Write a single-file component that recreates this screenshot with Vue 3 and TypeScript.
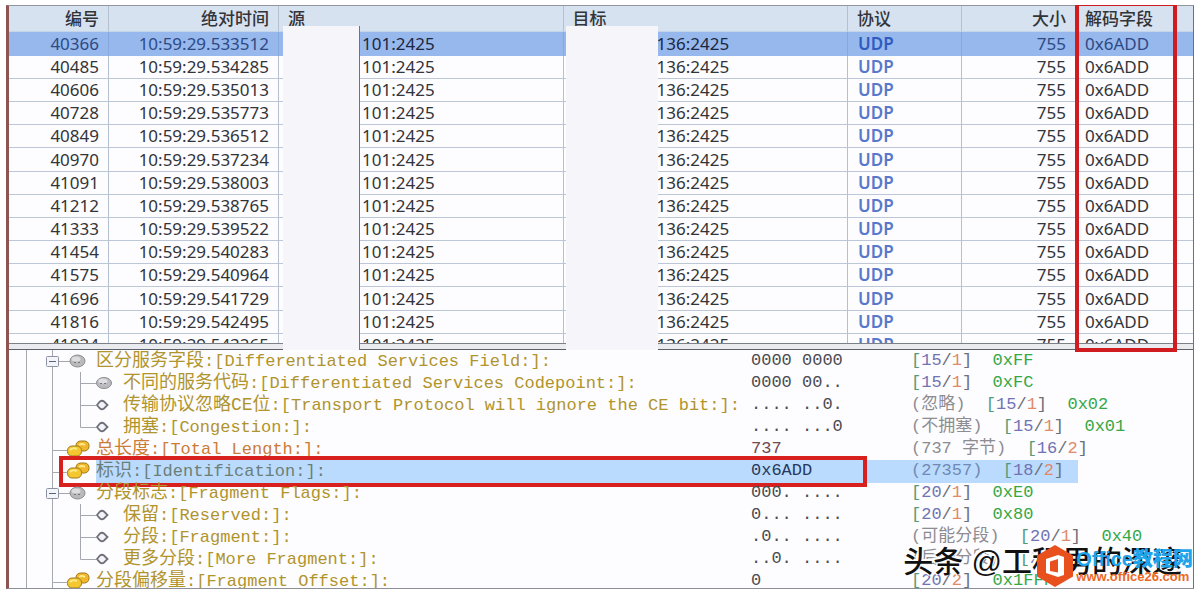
<script setup lang="ts">
interface Piece { t: string; c: string }
interface Field {
  kind: 'group' | 'gold' | 'oval' | 'ring'
  last?: boolean
  tone?: string
  selected?: boolean
  cn: string
  en: string
  value: string
  note?: string
  pos: [string, string]
  hex?: string
}

const packets: [string, string][] = [
  ['40366', '10:59:29.533512'],
  ['40485', '10:59:29.534285'],
  ['40606', '10:59:29.535013'],
  ['40728', '10:59:29.535773'],
  ['40849', '10:59:29.536512'],
  ['40970', '10:59:29.537234'],
  ['41091', '10:59:29.538003'],
  ['41212', '10:59:29.538765'],
  ['41333', '10:59:29.539522'],
  ['41454', '10:59:29.540283'],
  ['41575', '10:59:29.540964'],
  ['41696', '10:59:29.541729'],
  ['41816', '10:59:29.542495'],
  ['41934', '10:59:29.543265'],
]

const fields: Field[] = [
  { kind: 'group', cn: '区分服务字段', en: ':[Differentiated Services Field:]:', value: '0000 0000', pos: ['15', '1'], hex: '0xFF' },
  { kind: 'oval', cn: '不同的服务代码', en: ':[Differentiated Services Codepoint:]:', value: '0000 00..', pos: ['15', '1'], hex: '0xFC' },
  { kind: 'ring', cn: '传输协议忽略CE位', en: ':[Transport Protocol will ignore the CE bit:]:', value: '.... ..0.', note: '(忽略)', pos: ['15', '1'], hex: '0x02' },
  { kind: 'ring', last: true, cn: '拥塞', en: ':[Congestion:]:', value: '.... ...0', note: '(不拥塞)', pos: ['15', '1'], hex: '0x01' },
  { kind: 'gold', tone: 'orange', cn: '总长度', en: ':[Total Length:]:', value: '737', note: '(737 字节)', pos: ['16', '2'] },
  { kind: 'gold', tone: 'slate', selected: true, cn: '标识', en: ':[Identification:]:', value: '0x6ADD', note: '(27357)', pos: ['18', '2'] },
  { kind: 'group', cn: '分段标志', en: ':[Fragment Flags:]:', value: '000. ....', pos: ['20', '1'], hex: '0xE0' },
  { kind: 'ring', cn: '保留', en: ':[Reserved:]:', value: '0... ....', pos: ['20', '1'], hex: '0x80' },
  { kind: 'ring', cn: '分段', en: ':[Fragment:]:', value: '.0.. ....', note: '(可能分段)', pos: ['20', '1'], hex: '0x40' },
  { kind: 'ring', last: true, cn: '更多分段', en: ':[More Fragment:]:', value: '..0. ....', note: '(后一分段)', pos: ['20', '1'] },
  { kind: 'gold', cn: '分段偏移量', en: ':[Fragment Offset:]:', value: '0', pos: ['20', '2'], hex: '0x1FFF' },
]

const isChild = (f: Field) => f.kind === 'oval' || f.kind === 'ring'

const detail = (f: Field): Piece[] => {
  const out: Piece[] = []
  if (f.note) out.push({ t: f.note + '  ', c: 'note' })
  out.push({ t: '[', c: 'open' }, { t: f.pos[0], c: 'off' }, { t: '/', c: 'bar' }, { t: f.pos[1], c: 'len' }, { t: ']', c: 'bar' })
  if (f.hex) out.push({ t: '  ' + f.hex, c: 'hex' })
  return out
}
</script>

<template>
  <main class="window">
    <section class="packets">
      <div class="list">
        <table>
          <colgroup>
            <col class="c-no" /><col class="c-time" /><col /><col /><col class="c-proto" /><col class="c-size" /><col class="c-field" />
          </colgroup>
          <thead>
            <tr>
              <th class="right">编号</th>
              <th class="right">绝对时间</th>
              <th>源</th>
              <th>目标</th>
              <th>协议</th>
              <th class="right">大小</th>
              <th>解码字段</th>
            </tr>
          </thead>
          <tbody>
            <tr v-for="(p, i) in packets" :key="p[0]" :class="{ current: i === 0 }">
              <td class="right dim">{{ p[0] }}</td>
              <td class="right dim">{{ p[1] }}</td>
              <td class="src">101:2425</td>
              <td class="dst">136:2425</td>
              <td class="udp">UDP</td>
              <td class="right dim">755</td>
              <td class="dim">0x6ADD</td>
            </tr>
          </tbody>
        </table>
      </div>
      <div class="splitter"></div>
      <div class="overlay">
        <div class="mask mask-src"></div>
        <div class="mask mask-dst"></div>
        <div class="frame"></div>
      </div>
    </section>

    <section class="tree">
      <div v-for="f in fields" :key="f.cn" class="row" :class="[f.tone, { selected: f.selected }]">
        <div class="label">
          <svg :width="isChild(f) ? 114 : 87" height="22" aria-hidden="true">
            <path d="M17.5 0V22M43.5 0V22" class="line" />
            <template v-if="f.kind === 'group'">
              <path d="M49 11.500H61" class="line" />
              <rect x="37.500" y="6.500" width="12" height="10" rx="1" fill="#f4f5f8" stroke="#8d93a3" />
              <path d="M40 11.500H47" stroke="#5b6478" />
              <ellipse cx="68.500" cy="11" rx="7.500" ry="6" fill="#b9b9bc" stroke="#8b8b90" />
              <ellipse cx="67" cy="9" rx="4.500" ry="2.500" fill="#dcdcde" />
              <path d="M65 12.500h2m2 0h2" stroke="#77777c" />
            </template>
            <template v-else-if="f.kind === 'gold'">
              <path d="M44 12.500H58" class="line" />
              <rect x="67" y="3" width="13" height="10" rx="4.500" fill="#f0b62c" stroke="#9c7a20" />
              <rect x="58.500" y="8" width="14" height="10" rx="4.500" fill="#f5c72e" stroke="#9c7a20" />
              <path d="M61 12q3 -3 7 -1M70 7q3 -2 6 0" fill="none" stroke="#ffe98a" stroke-width="2" />
            </template>
            <template v-else>
              <path :d="f.last ? 'M71.5 0V11.5H87' : 'M71.5 0V22M72 11.5H87'" class="line" />
              <template v-if="f.kind === 'oval'">
                <ellipse cx="95" cy="11" rx="7.500" ry="5.500" fill="#bcbcc0" stroke="#8b8b90" />
                <ellipse cx="94" cy="9" rx="4.500" ry="2.500" fill="#dedee2" />
                <path d="M91 11.500h2m2 0h2" stroke="#77777c" />
              </template>
              <path v-else d="M88 11L91 7.500Q93 6 95 7.500L98.500 11L95 14.500Q93 16 91 14.500Z" fill="#f3f3f7" stroke="#6f6f7c" stroke-width="1.800" />
            </template>
          </svg>
          <span class="name"><span class="cn">{{ f.cn }}</span>{{ f.en }}</span>
        </div>
        <div class="value">{{ f.value }}</div>
        <div class="detail"><span v-for="(d, k) in detail(f)" :key="k" :class="d.c">{{ d.t }}</span></div>
        <div v-if="f.selected" class="frame-row"></div>
      </div>
    </section>

    <div class="author">头条 @工程男的深邃</div>
    <div class="brand">
      <svg width="38" height="44" viewBox="0 0 38 44" aria-hidden="true">
        <path d="M19 1L37 11.500V32.500L19 43L1 32.500V11.500Z" fill="#e8501d" />
        <path fill-rule="evenodd" d="M10 15L22 11L28 13V31L22 33L10 29ZM14 17.500V27L22 28.500V15Z" fill="#fff" />
      </svg>
      <div class="brand-text">
        <strong>Office教程网</strong>
        <span class="url">www.office26.com</span>
      </div>
    </div>
  </main>
</template>

<style>
body {
  margin: 0;
  background: #fff;
}
</style>

<style scoped>
.window {
  position: relative;
  box-sizing: border-box;
  height: 100vh;
  padding: 5px 6px 5px;
  display: flex;
  flex-direction: column;
  color: #333438;
}
.packets,
.tree {
  border-left: 3px solid #8c5552;
  border-right: 1px solid #6d7078;
  background: #fdfcfe;
}
.packets {
  position: relative;
  flex: none;
  border-top: 1px solid #90959e;
}
.list {
  height: 337px;
  overflow: hidden;
}
table {
  width: 100%;
  table-layout: fixed;
  border-collapse: separate;
  border-spacing: 0;
  font: 17px "Noto Sans", "Noto Sans CJK SC", sans-serif;
}
.c-no { width: 100px; }
.c-time { width: 170px; }
.c-proto { width: 114px; }
.c-size { width: 114px; }
.c-field { width: 117px; }
th,
td {
  box-sizing: border-box;
  height: 23px;
  padding: 0 9px;
  line-height: 22px;
  text-align: left;
  white-space: nowrap;
  overflow: hidden;
  border-right: 1px solid #b4c0d0;
  border-bottom: 1px solid #bcc8d8;
}
th {
  height: 26px;
  background: #d7e2f0;
  border-bottom-color: #c6d6ea;
  font-weight: 500;
  line-height: 24px;
}
tr:nth-child(6n) td { height: 24px; }
th:last-child,
td:last-child { border-right: 0; }
.right { text-align: right; }
.current td {
  height: 24px;
  background: #96b8ed;
  border-bottom-color: #96b8ed;
  border-right-color: #86a8dc;
  color: #1d2740;
}
.current .dim { color: #2e4a84; }
.src { padding-left: 83px; }
.dst { padding-left: 93px; }
td.udp {
  padding-left: 10px;
  color: #5878cc;
  font-weight: 600;
}
.current .udp { color: #2f5cc0; }
.splitter {
  height: 5px;
  border-top: 1px solid #7c8088;
  border-bottom: 1px solid #5c6068;
  background: #e9ebef;
}
.overlay {
  position: absolute;
  inset: 0;
  display: grid;
  grid-template-columns: 100px 170px 1fr 1fr 114px 114px 117px;
}
.mask {
  margin-top: 20px;
  background: #f6f5f9;
}
.mask-src {
  grid-column: 3;
  width: 76px;
  margin-left: 4px;
  border-right: 1px solid #70737c;
}
.mask-dst {
  grid-column: 4;
  width: 92px;
  margin-left: 2px;
}
.frame {
  grid-column: 7;
  margin: -1px 16px -2px -1px;
  border: 4px solid #d01c20;
  border-top-width: 1px;
}
.tree {
  flex: 1;
  min-height: 0;
  overflow: hidden;
  border-bottom: 1px solid #8d8f96;
  font: 17px "Liberation Mono", "Noto Sans CJK SC", monospace;
}
.row {
  position: relative;
  display: grid;
  grid-template-columns: 1fr 160px 282px;
  height: 22px;
  line-height: 22px;
  white-space: pre;
  color: #b0942c;
}
.label { display: flex; }
.label svg { flex: none; }
.line {
  fill: none;
  stroke: #a6a8b0;
}
.name { flex: 1; }
.cn { font-size: 18px; }
.value { color: #4a4b50; }
.orange { color: #cb7d38; }
.orange .value { color: #704850; }
.slate { color: #6b7f78; }
.slate .value { color: #26385c; }
.selected .name,
.selected .value,
.selected .detail { background: #badbfd; }
.selected .detail { margin-right: 115px; }
.frame-row {
  position: absolute;
  top: -4px;
  right: 326px;
  bottom: -5px;
  left: 50px;
  border: 4px solid #d8201f;
}
.note { color: #8c8c92; }
.selected .note { color: #7189b4; }
.open { color: #559a78; }
.off { color: #7073b4; }
.bar { color: #6c7078; }
.len { color: #e08a68; }
.hex { color: #35a846; }
.author {
  position: absolute;
  right: 18px;
  bottom: 14px;
  font: 500 30px/36px "Liberation Sans", "Noto Sans CJK SC", sans-serif;
  color: #111;
  white-space: nowrap;
  text-shadow: -1px -1px 0 #fff, 1px -1px 0 #fff, -1px 1px 0 #fff, -2px -2px 0 #fff;
}
.brand {
  position: absolute;
  right: 7px;
  bottom: 6px;
  display: flex;
  align-items: center;
  gap: 2px;
}
.brand-text {
  display: flex;
  flex-direction: column;
  font-family: "Liberation Sans", "Noto Sans CJK SC", sans-serif;
  font-weight: 700;
  white-space: nowrap;
}
.brand-text strong {
  font-size: 20px;
  line-height: 22px;
  color: #1fa3ea;
}
.url {
  font-size: 13px;
  line-height: 14px;
  color: #ec6a24;
}
</style>
